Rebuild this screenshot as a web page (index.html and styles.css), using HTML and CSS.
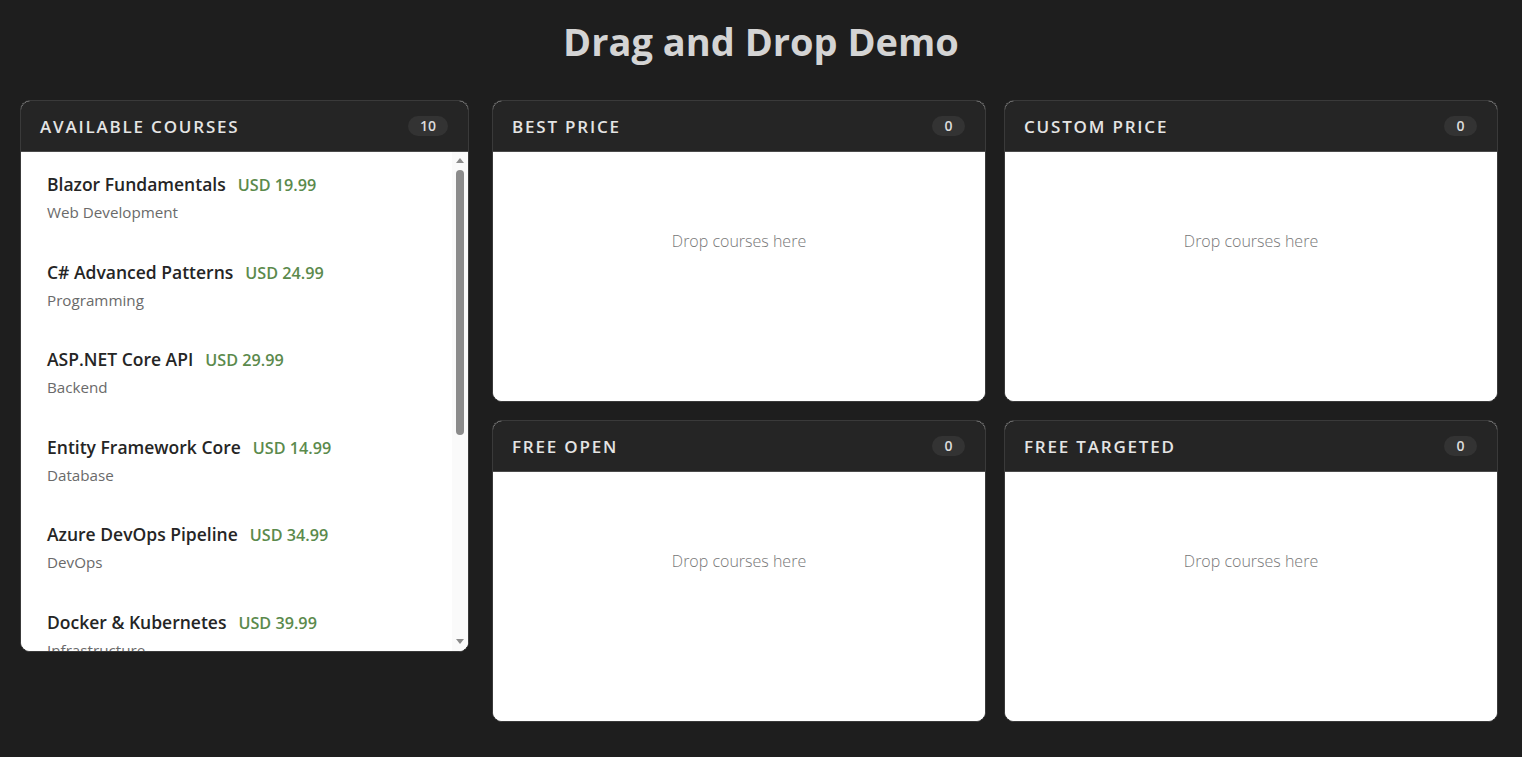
FILE: index.html
```html
<!DOCTYPE html>
<html lang="en">
<head>
    <meta charset="UTF-8">
    <meta name="viewport" content="width=device-width, initial-scale=1.0">
    <title>Drag and Drop Demo</title>
    <link rel="stylesheet" href="styles.css">
</head>
<body>
    <h1 class="page-title">Drag and Drop Demo</h1>

    <div class="board">
        <div class="panel panel-source">
            <div class="panel-header">
                <span class="panel-title">Available Courses</span>
                <span class="badge">10</span>
            </div>
            <div class="panel-body source-body">
                <div class="course-list">
                    <div class="course">
                        <div class="course-top"><span class="course-name">Blazor Fundamentals</span><span class="course-price">USD 19.99</span></div>
                        <div class="course-cat">Web Development</div>
                    </div>
                    <div class="course">
                        <div class="course-top"><span class="course-name">C# Advanced Patterns</span><span class="course-price">USD 24.99</span></div>
                        <div class="course-cat">Programming</div>
                    </div>
                    <div class="course">
                        <div class="course-top"><span class="course-name">ASP.NET Core API</span><span class="course-price">USD 29.99</span></div>
                        <div class="course-cat">Backend</div>
                    </div>
                    <div class="course">
                        <div class="course-top"><span class="course-name">Entity Framework Core</span><span class="course-price">USD 14.99</span></div>
                        <div class="course-cat">Database</div>
                    </div>
                    <div class="course">
                        <div class="course-top"><span class="course-name">Azure DevOps Pipeline</span><span class="course-price">USD 34.99</span></div>
                        <div class="course-cat">DevOps</div>
                    </div>
                    <div class="course">
                        <div class="course-top"><span class="course-name">Docker &amp; Kubernetes</span><span class="course-price">USD 39.99</span></div>
                        <div class="course-cat">Infrastructure</div>
                    </div>
                </div>
                <!-- fake scrollbar, the real one is hidden in screenshots -->
                <div class="scrollbar">
                    <span class="scroll-arrow up"></span>
                    <div class="scroll-track"><div class="scroll-thumb"></div></div>
                    <span class="scroll-arrow down"></span>
                </div>
            </div>
        </div>

        <div class="targets">
            <div class="panel">
                <div class="panel-header">
                    <span class="panel-title">Best Price</span>
                    <span class="badge">0</span>
                </div>
                <div class="panel-body drop-zone">Drop courses here</div>
            </div>
            <div class="panel">
                <div class="panel-header">
                    <span class="panel-title">Custom Price</span>
                    <span class="badge">0</span>
                </div>
                <div class="panel-body drop-zone">Drop courses here</div>
            </div>
            <div class="panel">
                <div class="panel-header">
                    <span class="panel-title">Free Open</span>
                    <span class="badge">0</span>
                </div>
                <div class="panel-body drop-zone">Drop courses here</div>
            </div>
            <div class="panel">
                <div class="panel-header">
                    <span class="panel-title">Free Targeted</span>
                    <span class="badge">0</span>
                </div>
                <div class="panel-body drop-zone">Drop courses here</div>
            </div>
        </div>
    </div>
</body>
</html>
```

FILE: styles.css
```css
body {
    margin: 0;
    background-color: #1e1e1e;
    font-family: "Open Sans", "Noto Sans", sans-serif;
    color: #d6d6d6;
}
.page-title {
    margin: 0;
    padding-top: 16px;
    height: 100px;
    box-sizing: border-box;
    text-align: center;
    font-size: 38px;
    font-weight: 700;
    line-height: 50px;
    color: #d4d4d4;
}
.board {
    display: flex;
    gap: 23px;
    padding: 0 24px 0 20px;
}
.panel {
    display: flex;
    flex-direction: column;
    border: 1px solid #3a3a3a;
    border-radius: 10px;
    background-color: #ffffff;
    overflow: hidden;
}
.panel-source {
    width: 449px;
    height: 552px;
    box-sizing: border-box;
    flex-shrink: 0;
}
.panel-header {
    display: flex;
    align-items: center;
    justify-content: space-between;
    height: 50px;
    padding: 0 20px 0 19px;
    background-color: #252525;
    border-bottom: 1px solid #4a4a4a;
    flex-shrink: 0;
}
.panel-title {
    font-size: 17px;
    font-weight: 600;
    letter-spacing: 1.8px;
    text-transform: uppercase;
    color: #e4e4e4;
}
.badge {
    min-width: 9px;
    height: 20px;
    padding: 0 12px;
    border-radius: 10px;
    background-color: #333333;
    font-size: 14px;
    font-weight: 600;
    line-height: 20px;
    text-align: center;
    color: #dcdcdc;
}
.panel-body {
    flex: 1;
    background-color: #ffffff;
}
.source-body {
    display: flex;
    min-height: 0;
}
.course-list {
    flex: 1;
    overflow: hidden;
}
.scrollbar {
    width: 16px;
    display: flex;
    flex-direction: column;
    align-items: center;
    padding: 6px 0 7px;
    background-color: #fafafa;
}
.scroll-arrow {
    width: 0;
    height: 0;
    border-left: 4px solid transparent;
    border-right: 4px solid transparent;
}
.scroll-arrow.up {
    border-bottom: 5px solid #8b8b8b;
}
.scroll-arrow.down {
    border-top: 5px solid #8b8b8b;
}
.scroll-track {
    flex: 1;
    padding-top: 7px;
}
.scroll-thumb {
    width: 8px;
    height: 265px;
    border-radius: 4px;
    background-color: #8b8b8b;
}
.course {
    padding: 20px 26px 15.6px;
}
.course-top {
    display: flex;
    align-items: baseline;
    gap: 12px;
    height: 24px;
    line-height: 24px;
}
.course-name {
    font-size: 17.5px;
    font-weight: 600;
    color: #252525;
}
.course-price {
    font-size: 16.2px;
    font-weight: 600;
    color: #5b8a4c;
}
.course-cat {
    margin-top: 5px;
    height: 23px;
    font-size: 15.2px;
    line-height: 22px;
    color: #6a6a6a;
}
.targets {
    flex: 1;
    display: grid;
    grid-template-columns: 1fr 1fr;
    grid-auto-rows: 302px;
    gap: 18px;
}
.drop-zone {
    padding-top: 78px;
    text-align: center;
    font-size: 16px;
    font-weight: 300;
    color: #777777;
}
```
